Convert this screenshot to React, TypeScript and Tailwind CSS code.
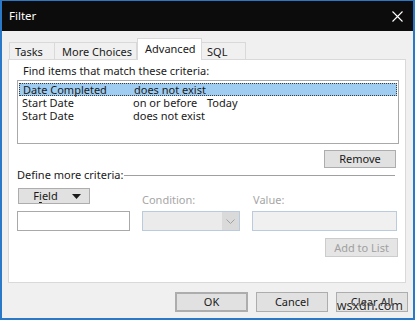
import { useState } from "react";

const font = { fontFamily: '"Noto Sans", "Open Sans", sans-serif' };

const rows = [
    { field: "Date Completed", cond: "does not exist", value: "" },
    { field: "Start Date", cond: "on or before", value: "Today" },
    { field: "Start Date", cond: "does not exist", value: "" },
];

const tabs = [
    { label: "Tasks", w: "w-[46px] pl-[5px]" },
    { label: "More Choices", w: "w-[82px] pl-[7px] border-l-0" },
    { label: "Advanced", w: "w-[65px] pl-[7px]", active: true },
    { label: "SQL", w: "w-[44px] pl-[5px] border-l-0" },
];

function Button({ children, className = "", disabled }: { children: React.ReactNode; className?: string; disabled?: boolean }) {
    return (
        <div
            className={
                "flex items-center justify-center border leading-[14px] whitespace-nowrap " +
                (disabled ? "border-[#cccccc] bg-[#e5e5e5] text-[#a0a0a0] " : "border-[#adadad] bg-[#e1e1e1] text-[#1a1a1a] ") +
                className
            }
        >
            {children}
        </div>
    );
}

export default function App() {
    const [selected] = useState(0);

    return (
        <div
            style={font}
            className="relative flex h-[320px] w-[415px] flex-col overflow-hidden border-2 border-t border-[#2a78c8] bg-[#f0f0f0] text-[11px] text-[#1a1a1a]"
        >
            {/* title bar */}
            <div className="flex h-[30px] shrink-0 items-center justify-between bg-[#0c0c0c] pl-[7px] pr-[9px] text-white">
                <span className="text-[11.5px] leading-[16px]">Filter</span>
                <svg width="11" height="11" viewBox="0 0 11 11" className="mr-[1px]">
                    <path d="M0.5 0.5 L10.5 10.5 M10.5 0.5 L0.5 10.5" stroke="#ffffff" strokeWidth="1.1" />
                </svg>
            </div>

            <div className="flex flex-col px-[6px] pt-[7px]">
                {/* tabs */}
                <div className="flex h-[21px] items-end pl-[1px]">
                    {tabs.map((t) =>
                        t.active ? (
                            <div
                                key={t.label}
                                className={"relative z-10 -mb-px h-[22px] border border-b-0 border-[#d9d9d9] bg-white pt-[2px] leading-[16px] " + t.w}
                            >
                                {t.label}
                            </div>
                        ) : (
                            <div
                                key={t.label}
                                className={"h-[17px] border border-b-0 border-[#d9d9d9] bg-[#f0f0f0] pt-[1px] leading-[16px] " + t.w}
                            >
                                {t.label}
                            </div>
                        )
                    )}
                </div>

                {/* panel */}
                <div className="flex h-[224px] w-[398px] flex-col border border-[#d9d9d9] bg-white pl-[8px] pr-[6px]">
                    <div className="mt-[4px] ml-[6px] leading-[14px]">Find items that match these criteria:</div>

                    <div className="mt-[2px] h-[64px] border border-[#a9a9a9] bg-white p-[1px] pt-[2px]">
                        {rows.map((r, i) => (
                            <div
                                key={i}
                                className={
                                    "flex h-[13px] items-center whitespace-nowrap pl-[3px] leading-[13px] " +
                                    (i === selected ? "border border-dotted border-[#3b3b3b] bg-[#9fcdf2] pl-[2px]" : "")
                                }
                            >
                                <span className="w-[111px] shrink-0">{r.field}</span>
                                <span className="w-[74px] shrink-0">{r.cond}</span>
                                <span>{r.value}</span>
                            </div>
                        ))}
                    </div>

                    <div className="mt-[6px] flex justify-end pr-[3px]">
                        <Button className="h-[18px] w-[72px]">Remove</Button>
                    </div>

                    <div className="flex items-center leading-[14px]">
                        <span>Define more criteria:</span>
                        <div className="ml-[1px] mr-[4px] h-px flex-1 bg-[#a0a0a0]" />
                    </div>

                    <div className="mt-[6px] grid grid-cols-[113px_98px_145px] gap-x-[12px]">
                        <div className="h-[19px] pl-[1px]">
                            <Button className="h-[16px] w-[72px] gap-[14px] pl-[6px]">
                                <span>
                                    F<span className="underline underline-offset-2">i</span>eld
                                </span>
                                <svg width="9" height="5" viewBox="0 0 9 5">
                                    <path d="M0 0 H9 L4.5 5 Z" fill="#1a1a1a" />
                                </svg>
                            </Button>
                        </div>
                        <div className="self-end leading-[14px] text-[#a6a6a6]">Condition:</div>
                        <div className="self-end pl-[1px] leading-[14px] text-[#a6a6a6]">Value:</div>

                        <div className="mt-[4px] h-[20px] border border-[#a9a9a9] bg-white" />
                        <div className="mt-[4px] flex h-[20px] border border-[#b9cbdc] bg-[#ebebeb]">
                            <div className="flex-1" />
                            <div className="flex w-[17px] items-center justify-center bg-[#dadada]">
                                <svg width="9" height="5" viewBox="0 0 9 5">
                                    <path d="M0.5 0.5 L4.5 4.5 L8.5 0.5" stroke="#a0a0a0" fill="none" />
                                </svg>
                            </div>
                        </div>
                        <div className="mt-[4px] h-[20px] border border-[#b9cbdc] bg-[#f0f0f0]" />
                    </div>

                    <div className="mt-[7px] flex justify-end pr-[1px]">
                        <Button disabled className="h-[19px] w-[73px]">
                            Add to List
                        </Button>
                    </div>
                </div>

                {/* dialog buttons */}
                <div className="mt-[9px] flex justify-end gap-[8px]">
                    <Button className="h-[20px] w-[73px] border-2 border-[#0078d7]">OK</Button>
                    <Button className="h-[20px] w-[72px]">Cancel</Button>
                    <Button className="-mr-[1px] h-[20px] w-[72px]">Clear All</Button>
                </div>
            </div>

            {/* watermark */}
            <div className="absolute bottom-[5px] right-[10px] text-[12.5px] leading-[14px] text-[#2b2b2b] [text-shadow:0_0_2px_#fff]">
                wsxdn.com
            </div>
        </div>
    );
}
